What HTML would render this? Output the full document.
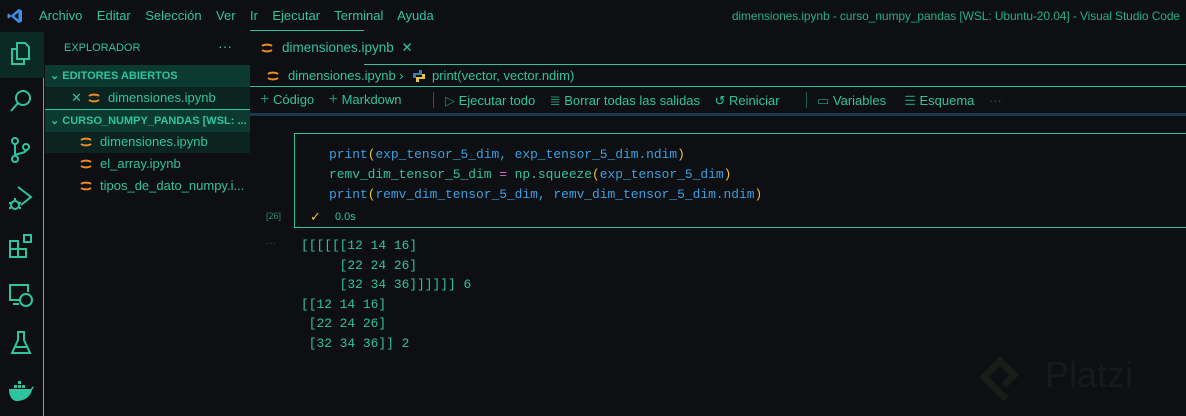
<!DOCTYPE html>
<html><head><meta charset="utf-8"><style>
*{margin:0;padding:0;box-sizing:border-box}
body{width:1186px;height:416px;background:#0e0f13;overflow:hidden;position:relative;font-family:"Liberation Sans",sans-serif;color:#2ec4a0;font-size:13px}
.a{position:absolute;white-space:nowrap}
.mono{font-family:"Liberation Mono",monospace;font-size:12.9px}
svg{position:absolute}
.j{width:14px;height:14px}
</style></head><body>
<svg style="left:7px;top:8px" width="16" height="16" viewBox="0 0 16 16"><path d="M11.5 1 L15 2.5 V13.5 L11.5 15 L4 8.5 L1.5 10.5 L0.5 10 V6 L1.5 5.5 L4 7.5 Z M11.5 4.5 L7 8 L11.5 11.5 Z" fill="#3b8fe0"/></svg>
<div class="a" style="left:39px;top:8px;font-size:13px;color:#2ec4a0">Archivo&nbsp;&nbsp;&nbsp; Editar&nbsp;&nbsp;&nbsp; Selección&nbsp;&nbsp;&nbsp; Ver&nbsp;&nbsp;&nbsp; Ir&nbsp;&nbsp;&nbsp; Ejecutar&nbsp;&nbsp;&nbsp; Terminal&nbsp;&nbsp;&nbsp; Ayuda</div>
<div class="a" style="right:6px;top:9px;font-size:12px;color:#22b07c;letter-spacing:-0.1px">dimensiones.ipynb - curso_numpy_pandas [WSL: Ubuntu-20.04] - Visual Studio Code</div>
<div class="a" style="left:0;top:32px;width:44px;height:384px;background:#0e0f13;border-right:1px solid #2ec4a0"></div>
<div class="a" style="left:0;top:32px;width:44px;height:46px;background:#0c2a24"></div>
<svg style="left:9px;top:40px" width="24" height="28" viewBox="0 0 24 28" fill="none" stroke="#2ec4a0" stroke-width="2"><path d="M8 3h8l4 4v12H8z"/><path d="M8 9H3v15h12v-5"/></svg>
<svg style="left:9px;top:88px" width="24" height="26" viewBox="0 0 24 26" fill="none" stroke="#2ec4a0" stroke-width="2"><circle cx="14" cy="10" r="7"/><path d="M9 15L2 23"/></svg>
<svg style="left:10px;top:136px" width="22" height="28" viewBox="0 0 22 28" fill="none" stroke="#2ec4a0" stroke-width="2"><circle cx="5" cy="5" r="3"/><circle cx="5" cy="23" r="3"/><circle cx="16" cy="11" r="3"/><path d="M5 8v12M16 14c0 4-11 3-11 6"/></svg>
<svg style="left:8px;top:184px" width="26" height="28" viewBox="0 0 26 28" fill="none" stroke="#2ec4a0" stroke-width="2"><path d="M10 3l13 10-10 8"/><circle cx="7" cy="21" r="4"/><path d="M3 19h-2M3 24h-2M11 19h2M11 24h2M7 16v-2"/></svg>
<svg style="left:8px;top:233px" width="26" height="26" viewBox="0 0 26 26" fill="none" stroke="#2ec4a0" stroke-width="2"><path d="M2 8h8v8H2zM2 16h8v8H2zM10 16h8v8h-8zM16 2h7v7h-7z"/></svg>
<svg style="left:8px;top:282px" width="26" height="26" viewBox="0 0 26 26" fill="none" stroke="#2ec4a0" stroke-width="2"><path d="M12 18H2V3h18v7M5 22h6"/><circle cx="18" cy="18" r="6"/></svg>
<svg style="left:10px;top:330px" width="22" height="26" viewBox="0 0 22 26" fill="none" stroke="#2ec4a0" stroke-width="2"><path d="M7 2h8M8 2v8L2 23h18L14 10V2M5 17h12"/></svg>
<svg style="left:8px;top:380px" width="26" height="22" viewBox="0 0 26 22"><path d="M1 9h22c1-2 2-3 3-2-1 1-1 2-2 3-2 8-9 11-15 11C4 21 1 16 1 9z" fill="#2ec4a0"/><path d="M6 5h3v3H6zM10 5h3v3h-3zM14 5h3v3h-3zM10 1h3v3h-3z" fill="#2ec4a0"/></svg>
<div class="a" style="left:64px;top:42px;font-size:11px;color:#2ec4a0">EXPLORADOR</div>
<div class="a" style="left:218px;top:38px;font-size:14px;color:#2ec4a0">···</div>
<div class="a" style="left:45px;top:65px;width:205px;height:22px;background:#0c3a30"></div>
<div class="a" style="left:50px;top:69px;font-size:11px;font-weight:bold;color:#2ec4a0">⌄ EDITORES ABIERTOS</div>
<div class="a" style="left:45px;top:87px;width:205px;height:22px;background:#0b241f"></div>
<div class="a" style="left:71px;top:90px;font-size:13px">✕</div>
<svg class="j" style="left:87px;top:91px" viewBox="0 0 14 14" fill="none" stroke="#f08a24" stroke-width="2"><path d="M2 5a6 3 0 0 1 10 0M2 9a6 3 0 0 0 10 0"/></svg>
<div class="a" style="left:108px;top:90px;font-size:13px">dimensiones.ipynb</div>
<div class="a" style="left:45px;top:109px;width:205px;height:1px;background:#2ec4a0"></div>
<div class="a" style="left:45px;top:110px;width:205px;height:22px;background:#0c3a30"></div>
<div class="a" style="left:50px;top:114px;font-size:11px;font-weight:bold;color:#2ec4a0">⌄ CURSO_NUMPY_PANDAS [WSL: ...</div>
<div class="a" style="left:45px;top:132px;width:205px;height:21px;background:#0b241f"></div>
<svg class="j" style="left:79px;top:135px" viewBox="0 0 14 14" fill="none" stroke="#f08a24" stroke-width="2"><path d="M2 5a6 3 0 0 1 10 0M2 9a6 3 0 0 0 10 0"/></svg>
<div class="a" style="left:100px;top:134px;font-size:13px">dimensiones.ipynb</div>
<svg class="j" style="left:79px;top:157px" viewBox="0 0 14 14" fill="none" stroke="#f08a24" stroke-width="2"><path d="M2 5a6 3 0 0 1 10 0M2 9a6 3 0 0 0 10 0"/></svg>
<div class="a" style="left:100px;top:156px;font-size:13px">el_array.ipynb</div>
<svg class="j" style="left:79px;top:179px" viewBox="0 0 14 14" fill="none" stroke="#f08a24" stroke-width="2"><path d="M2 5a6 3 0 0 1 10 0M2 9a6 3 0 0 0 10 0"/></svg>
<div class="a" style="left:100px;top:178px;font-size:13px">tipos_de_dato_numpy.i...</div>
<div class="a" style="left:250px;top:30px;width:114px;height:1px;background:#2ec4a0"></div>
<svg class="j" style="left:260px;top:41px" viewBox="0 0 14 14" fill="none" stroke="#f08a24" stroke-width="2"><path d="M2 5a6 3 0 0 1 10 0M2 9a6 3 0 0 0 10 0"/></svg>
<div class="a" style="left:282px;top:40px;font-size:13.5px">dimensiones.ipynb&nbsp; ✕</div>
<div class="a" style="left:364px;top:64px;width:822px;height:1px;background:#2ec4a0"></div>
<div class="a" style="left:250px;top:86px;width:936px;height:1px;background:#2ec4a0"></div>
<svg class="j" style="left:266px;top:69px" viewBox="0 0 14 14" fill="none" stroke="#f08a24" stroke-width="2"><path d="M2 5a6 3 0 0 1 10 0M2 9a6 3 0 0 0 10 0"/></svg>
<div class="a" style="left:288px;top:68px;font-size:13px">dimensiones.ipynb ›</div>
<svg style="left:412px;top:69px" width="14" height="14" viewBox="0 0 14 14"><path d="M7 1h3v5H4v3H1V4h6z" fill="#3b7bbf"/><path d="M7 13H4V8h6V5h3v5H7z" fill="#e8c440"/></svg>
<div class="a" style="left:432px;top:68px;font-size:13px">print(vector, vector.ndim)</div>
<div class="a" style="left:260px;top:91px;font-size:13px"><span style="font-size:16px;color:#1c8f74">+</span> Código&nbsp;&nbsp;&nbsp; <span style="font-size:16px;color:#1c8f74">+</span> Markdown</div>
<div class="a" style="left:433px;top:92px;width:1px;height:16px;background:#1c5f50"></div>
<div class="a" style="left:445px;top:93px;font-size:13px"><span style="color:#1c8f74">▷</span> Ejecutar todo&nbsp;&nbsp;&nbsp; <span style="color:#1c8f74">≣</span> Borrar todas las salidas&nbsp;&nbsp;&nbsp; ↺ Reiniciar</div>
<div class="a" style="left:806px;top:92px;width:1px;height:16px;background:#1c5f50"></div>
<div class="a" style="left:817px;top:93px;font-size:13px"><span style="color:#1c8f74">▭</span> Variables&nbsp;&nbsp;&nbsp;&nbsp; <span style="color:#1c8f74">☰</span> Esquema&nbsp;&nbsp;&nbsp; <span style="color:#1c5f50">···</span></div>
<div class="a" style="left:250px;top:113px;width:936px;height:3px;background:#173a52"></div>
<div class="a" style="left:294px;top:133px;width:900px;height:95px;border:1px solid #2ec4a0;background:#0e0f13"></div>
<div class="a mono" style="left:329px;top:145px;line-height:20px;color:#3aa0e0">print<span style="color:#e8c440">(</span>exp_tensor_5_dim, exp_tensor_5_dim.ndim<span style="color:#e8c440">)</span><br><span style="color:#2ec4a0">remv_dim_tensor_5_dim <span style="color:#d070d0">=</span> np.squeeze<span style="color:#e8c440">(</span><span style="color:#3aa0e0">exp_tensor_5_dim</span><span style="color:#e8c440">)</span></span><br>print<span style="color:#e8c440">(</span>remv_dim_tensor_5_dim, remv_dim_tensor_5_dim.ndim<span style="color:#e8c440">)</span></div>
<div class="a" style="left:266px;top:211px;font-size:9px;color:#1c8f74">[26]</div>
<div class="a" style="left:310px;top:209px;font-size:13px;color:#e8c440">✓</div>
<div class="a" style="left:335px;top:211px;font-size:11px;color:#2ec4a0">0.0s</div>
<div class="a" style="left:266px;top:238px;font-size:10px;color:#1c5f50">···</div>
<div class="a mono" style="left:301px;top:236px;line-height:19.5px;color:#2ec4a0;white-space:pre">[[[[[[12 14 16]
     [22 24 26]
     [32 34 36]]]]]] 6
[[12 14 16]
 [22 24 26]
 [32 34 36]] 2</div>
<svg style="left:976px;top:345px" width="48" height="62" viewBox="0 0 48 62" fill="none" stroke="#1a1d17" stroke-width="7"><path d="M30 54L8 32 24 16l14 14-10 10"/></svg>
<div class="a" style="left:1045px;top:354px;font-size:36px;color:#17191d">Platzi</div>
</body></html>
